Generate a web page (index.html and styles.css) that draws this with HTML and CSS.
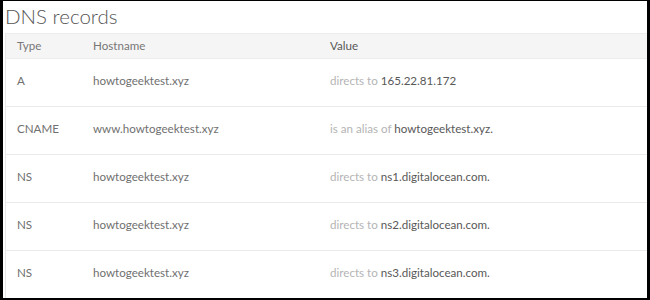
FILE: index.html
```html
<!DOCTYPE html>
<html>
<head>
<meta charset="utf-8">
<link rel="stylesheet" href="styles.css">
</head>
<body>
<div class="frame">
  <h1 class="title">DNS records</h1>
  <div class="table">
    <div class="row head">
      <div class="c type">Type</div>
      <div class="c host">Hostname</div>
      <div class="c val">Value</div>
    </div>
    <div class="row">
      <div class="c type">A</div>
      <div class="c host">howtogeektest.xyz</div>
      <div class="c val"><span class="muted">directs to</span> 165.22.81.172</div>
    </div>
    <div class="row">
      <div class="c type">CNAME</div>
      <div class="c host">www.howtogeektest.xyz</div>
      <div class="c val"><span class="muted">is an alias of</span> howtogeektest.xyz.</div>
    </div>
    <div class="row">
      <div class="c type">NS</div>
      <div class="c host">howtogeektest.xyz</div>
      <div class="c val"><span class="muted">directs to</span> ns1.digitalocean.com.</div>
    </div>
    <div class="row">
      <div class="c type">NS</div>
      <div class="c host">howtogeektest.xyz</div>
      <div class="c val"><span class="muted">directs to</span> ns2.digitalocean.com.</div>
    </div>
    <div class="row">
      <div class="c type">NS</div>
      <div class="c host">howtogeektest.xyz</div>
      <div class="c val"><span class="muted">directs to</span> ns3.digitalocean.com.</div>
    </div>
  </div>
</div>
</body>
</html>
```

FILE: styles.css
```css
html, body {
  margin: 0;
  padding: 0;
  background: #fff;
}
.frame {
  box-sizing: border-box;
  width: 650px;
  height: 300px;
  border-top: 1px solid #000;
  border-left: 3px solid #000;
  border-right: 3px solid #000;
  border-bottom: 2px solid #000;
  padding: 0 0 0 2px;
  overflow: hidden;
  font-family: Lato, "Open Sans", sans-serif;
}
.title {
  margin: 0;
  height: 32px;
  padding: 3px 0 0 0;
  box-sizing: border-box;
  font-size: 20.5px;
  font-weight: 300;
  color: #555;
  line-height: 24px;
}
.table {
  border-left: 1px solid #e8e8e8;
  border-top: 1px solid #ececec;
}
.row {
  display: grid;
  grid-template-columns: 76px 237px 1fr;
  align-items: center;
  height: 48px;
  border-bottom: 1px solid #eaeaea;
  box-sizing: border-box;
  padding: 0 0 4px 11px;
  font-size: 11.6px;
  color: #707070;
}
.row.head {
  height: 25px;
  padding-bottom: 1px;
  background: #f5f5f5;
  color: #777;
  border-bottom: 1px solid #ececec;
}
.val {
  color: #585858;
}
.muted {
  color: #b4b4b4;
}
```
